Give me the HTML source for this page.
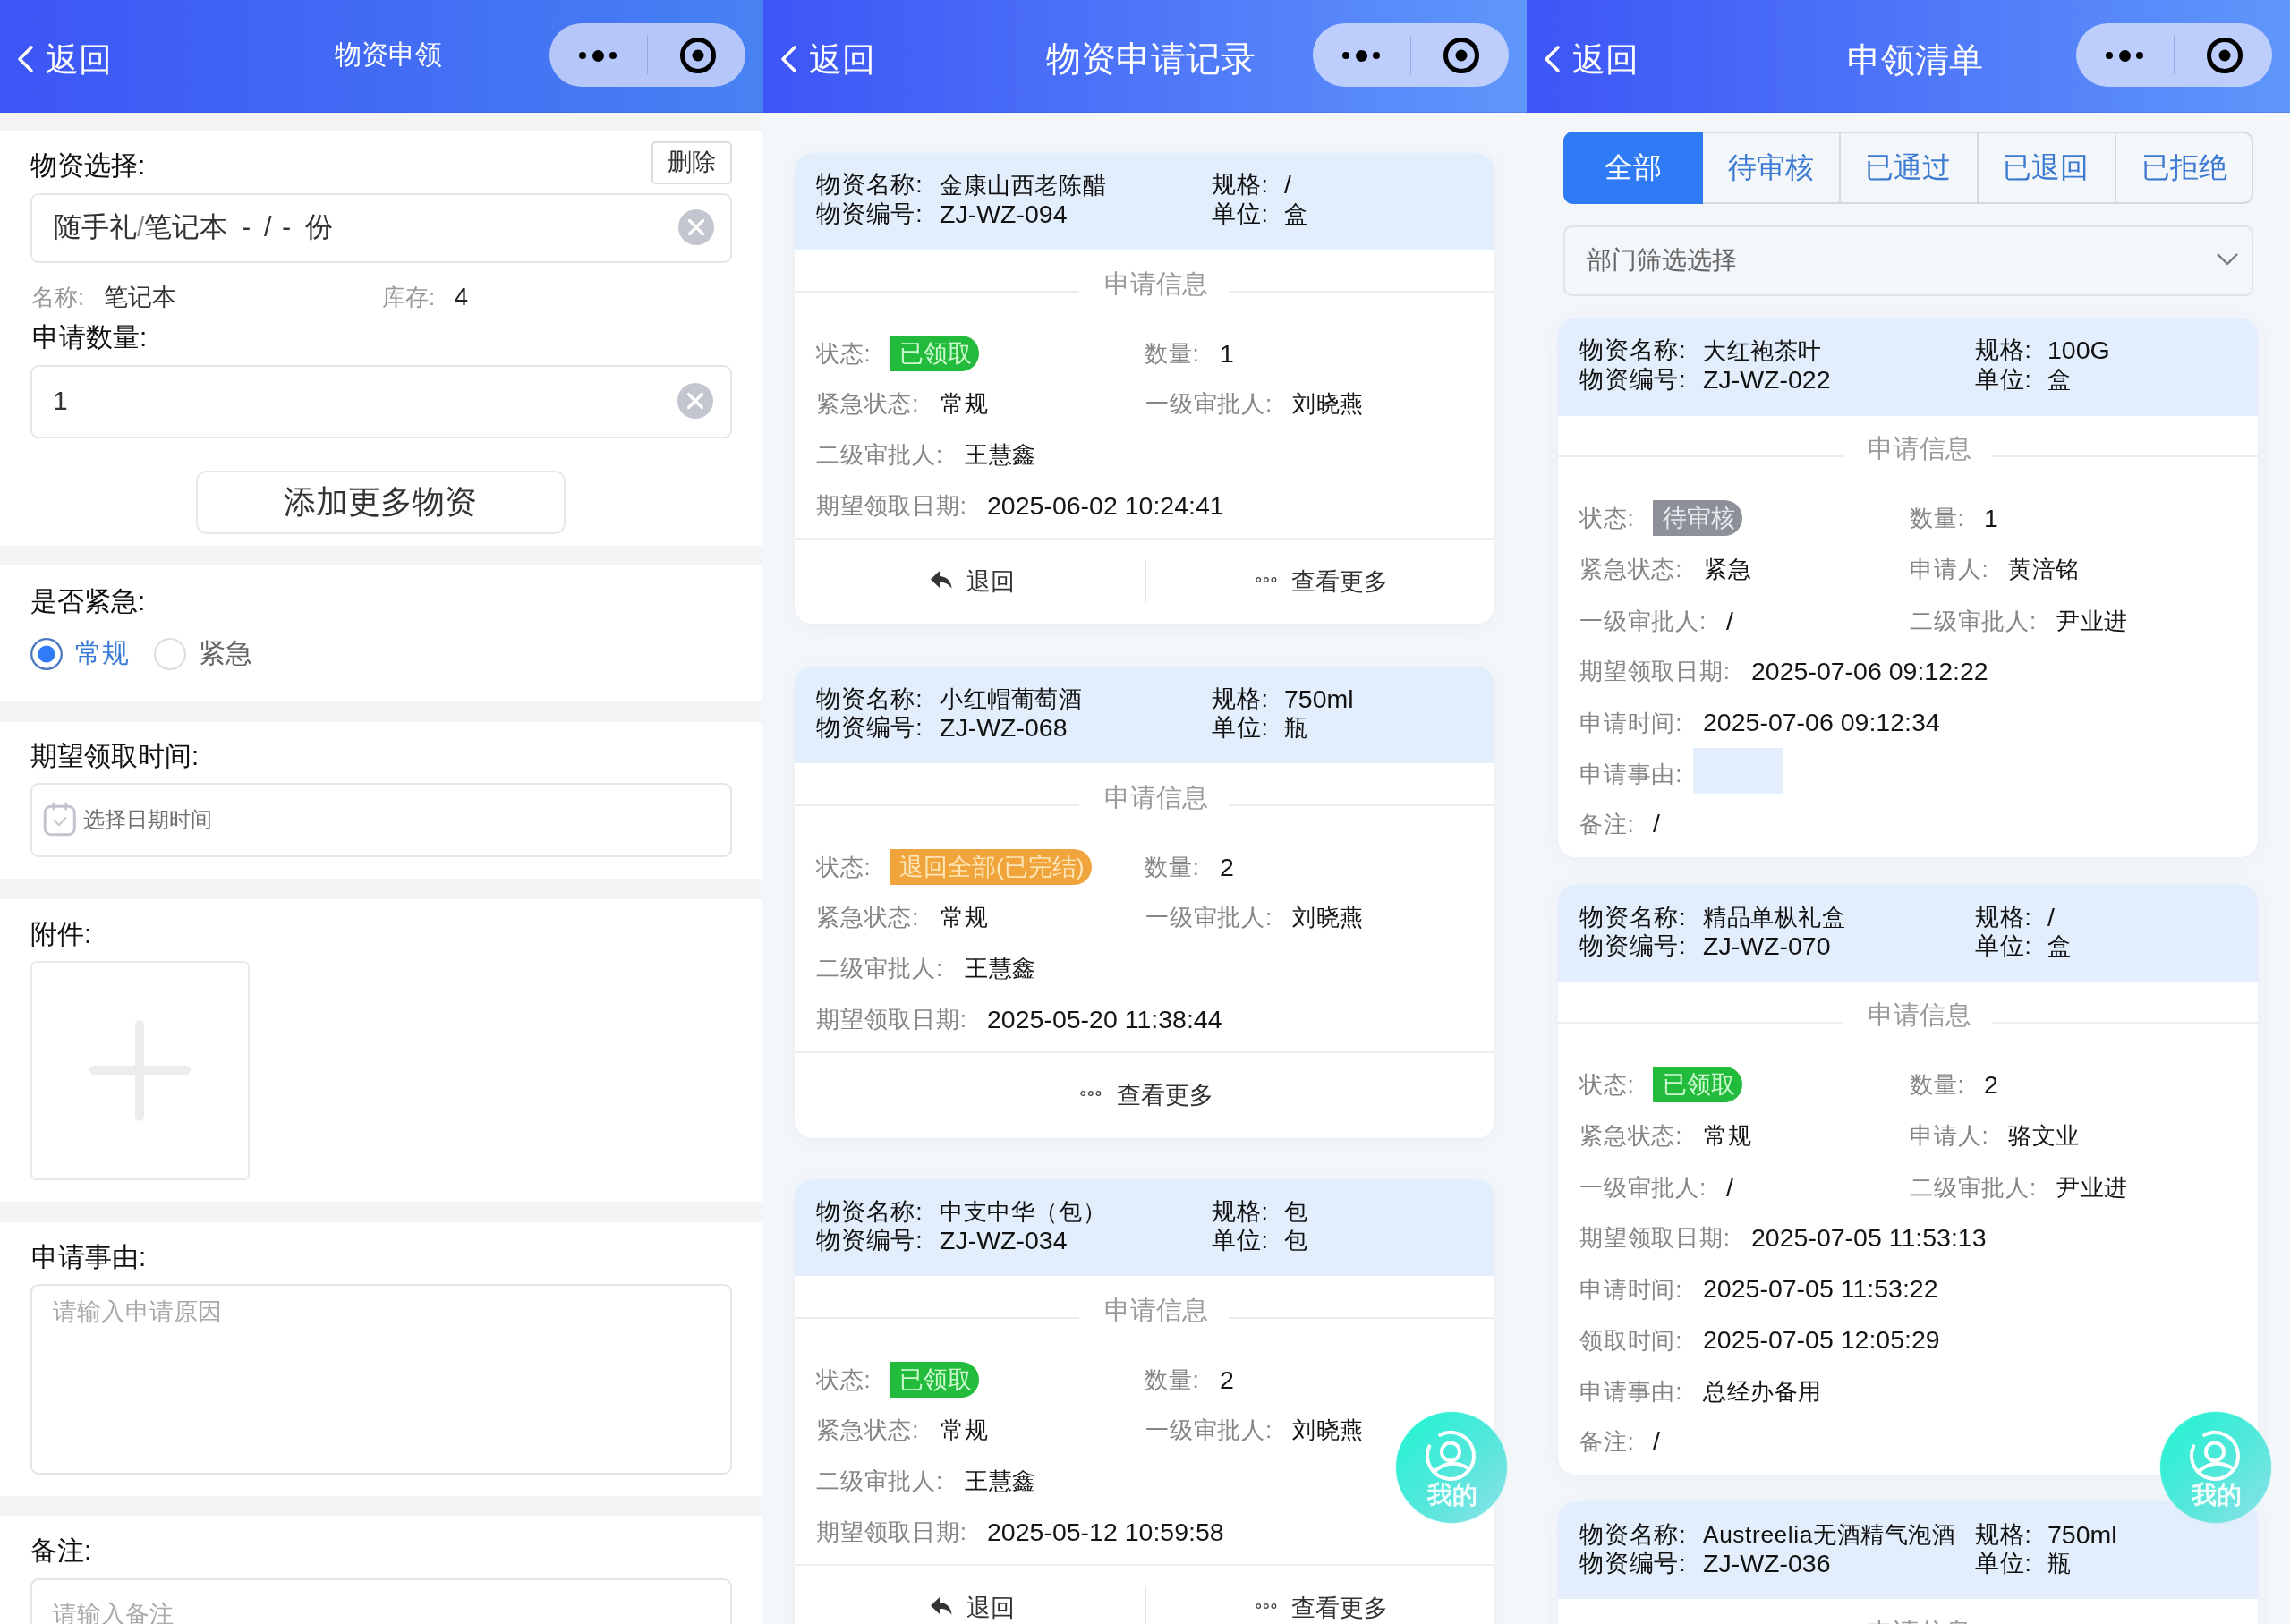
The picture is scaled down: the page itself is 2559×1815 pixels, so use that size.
<!DOCTYPE html><html><head><meta charset="utf-8"><title>物资申领</title><style>
*{margin:0;padding:0;box-sizing:border-box}
html,body{width:2559px;height:1815px;overflow:hidden;background:#fff}
body{position:relative;font-family:"Liberation Sans",sans-serif;-webkit-font-smoothing:antialiased}
.t{position:absolute;white-space:nowrap;will-change:transform}
.b{position:absolute}
svg{position:absolute;overflow:visible}
</style></head><body>
<div class="b" style="left:0.0px;top:126.0px;width:853.0px;height:1689.0px;background:#f4f4f4"></div>
<div class="b" style="left:0.0px;top:0.0px;width:853.0px;height:126.0px;background:linear-gradient(90deg,#3d55f6 0%,#4782f2 100%)"></div>
<div class="b" style="left:0.0px;top:124.5px;width:853.0px;height:1.5px;background:rgba(40,60,160,0.18)"></div>
<svg style="left:18px;top:50px" width="24" height="34" viewBox="0 0 24 34"><polyline points="17,3 4,16 17,29" fill="none" stroke="#fff" stroke-width="3.6" stroke-linecap="round" stroke-linejoin="round"/></svg>
<div class="t" style="left:51.0px;top:48.8px;font-size:36.5px;line-height:36.5px;color:#fff;">返回</div>
<div class="t" style="left:374.0px;top:46.2px;font-size:29.5px;line-height:29.5px;color:#fff;">物资申领</div>
<div class="b" style="left:614.0px;top:26.0px;width:219.0px;height:71.0px;background:#b5c6f9;border-radius:36px"></div>
<div class="b" style="left:722.5px;top:40.0px;width:1.5px;height:43.0px;background:rgba(90,110,170,0.35)"></div>
<div class="b" style="left:647.0px;top:58.0px;width:8.0px;height:8.0px;background:#000;border-radius:50%"></div>
<div class="b" style="left:661.5px;top:55.5px;width:13.0px;height:13.0px;background:#000;border-radius:50%"></div>
<div class="b" style="left:681.0px;top:58.0px;width:8.0px;height:8.0px;background:#000;border-radius:50%"></div>
<svg style="left:760px;top:42px" width="40" height="40" viewBox="0 0 40 40"><circle cx="20" cy="20" r="17.5" fill="none" stroke="#000" stroke-width="5"/><circle cx="20" cy="20" r="6.5" fill="#000"/></svg>
<div class="b" style="left:0.0px;top:146.0px;width:852.0px;height:464.0px;background:#fff"></div>
<div class="b" style="left:0.0px;top:632.0px;width:852.0px;height:151.0px;background:#fff"></div>
<div class="b" style="left:0.0px;top:807.0px;width:852.0px;height:175.0px;background:#fff"></div>
<div class="b" style="left:0.0px;top:1005.0px;width:852.0px;height:338.0px;background:#fff"></div>
<div class="b" style="left:0.0px;top:1366.0px;width:852.0px;height:306.0px;background:#fff"></div>
<div class="b" style="left:0.0px;top:1694.0px;width:852.0px;height:121.0px;background:#fff"></div>
<div class="t" style="left:34.0px;top:169.8px;font-size:29.5px;line-height:29.5px;color:#111;">物资选择:</div>
<div class="b" style="left:728.0px;top:158.0px;width:90.0px;height:48.0px;border:2px solid #dcdcdc;border-radius:5px;background:#fff"></div>
<div class="t" style="left:746.0px;top:167.6px;font-size:26.8px;line-height:26.8px;color:#333;">删除</div>
<div class="b" style="left:34.0px;top:216.0px;width:784.0px;height:78.0px;border:2px solid #e6e6e6;border-radius:9px"></div>
<div class="t" style="left:60.0px;top:237.8px;font-size:30.5px;line-height:30.5px;color:#333;">随手礼<span style="color:#888">/</span>笔记本</div>
<div class="t" style="left:270.0px;top:237.8px;font-size:30.5px;line-height:30.5px;color:#333;">-</div>
<div class="t" style="left:295.0px;top:237.8px;font-size:30.5px;line-height:30.5px;color:#333;">/</div>
<div class="t" style="left:315.0px;top:237.8px;font-size:30.5px;line-height:30.5px;color:#333;">-</div>
<div class="t" style="left:341.0px;top:237.8px;font-size:30.5px;line-height:30.5px;color:#333;">份</div>
<svg style="left:758px;top:234px" width="40" height="40" viewBox="0 0 40 40"><circle cx="20" cy="20" r="20" fill="#c3c6ce"/><path d="M12.5 12.5L27.5 27.5M27.5 12.5L12.5 27.5" stroke="#fff" stroke-width="3.2" stroke-linecap="round"/></svg>
<div class="t" style="left:35.0px;top:319.0px;font-size:26px;line-height:26px;color:#999;">名称:</div>
<div class="t" style="left:116.0px;top:318.8px;font-size:26.5px;line-height:26.5px;color:#333;">笔记本</div>
<div class="t" style="left:427.0px;top:319.0px;font-size:26px;line-height:26px;color:#999;">库存:</div>
<div class="t" style="left:508.0px;top:318.5px;font-size:27px;line-height:27px;color:#222;">4</div>
<div class="t" style="left:36.0px;top:362.2px;font-size:29.5px;line-height:29.5px;color:#111;">申请数量:</div>
<div class="b" style="left:34.0px;top:408.0px;width:784.0px;height:82.0px;border:2px solid #e6e6e6;border-radius:9px"></div>
<div class="t" style="left:59.0px;top:433.0px;font-size:30px;line-height:30px;color:#333;">1</div>
<svg style="left:757px;top:428px" width="40" height="40" viewBox="0 0 40 40"><circle cx="20" cy="20" r="20" fill="#c3c6ce"/><path d="M12.5 12.5L27.5 27.5M27.5 12.5L12.5 27.5" stroke="#fff" stroke-width="3.2" stroke-linecap="round"/></svg>
<div class="b" style="left:219.0px;top:526.0px;width:413.0px;height:71.0px;border:2px solid #e9e9e9;border-radius:12px"></div>
<div class="t" style="left:317.0px;top:542.5px;font-size:36px;line-height:36px;color:#333;">添加更多物资</div>
<div class="t" style="left:34.0px;top:657.2px;font-size:29.5px;line-height:29.5px;color:#111;">是否紧急:</div>
<svg style="left:33px;top:712px" width="38" height="38" viewBox="0 0 38 38"><circle cx="19" cy="19" r="16.8" fill="none" stroke="#4d78c0" stroke-width="2.3"/><circle cx="19" cy="19" r="9.5" fill="#2f7cf6"/></svg>
<div class="t" style="left:84.0px;top:714.5px;font-size:30px;line-height:30px;color:#3b7bd6;">常规</div>
<svg style="left:171px;top:712px" width="38" height="38" viewBox="0 0 38 38"><circle cx="19" cy="19" r="17" fill="none" stroke="#dedede" stroke-width="2.2"/></svg>
<div class="t" style="left:222.0px;top:714.5px;font-size:30px;line-height:30px;color:#666;">紧急</div>
<div class="t" style="left:34.0px;top:830.2px;font-size:29.5px;line-height:29.5px;color:#111;">期望领取时间:</div>
<div class="b" style="left:34.0px;top:875.0px;width:784.0px;height:83.0px;border:2px solid #e6e6e6;border-radius:9px"></div>
<svg style="left:48px;top:897px" width="38" height="38" viewBox="0 0 38 38"><rect x="2.2" y="4.2" width="33.1" height="31.6" rx="7" fill="none" stroke="#c2c6cc" stroke-width="3"/><path d="M11.8 1v6M25.7 1v6" stroke="#c2c6cc" stroke-width="3" stroke-linecap="round"/><path d="M12.7 20l5.3 5.3 7.2-8.2" fill="none" stroke="#c8ccd2" stroke-width="2.2" stroke-linecap="round" stroke-linejoin="round"/></svg>
<div class="t" style="left:93.0px;top:904.0px;font-size:24px;line-height:24px;color:#707070;">选择日期时间</div>
<div class="t" style="left:34.0px;top:1029.2px;font-size:29.5px;line-height:29.5px;color:#111;">附件:</div>
<div class="b" style="left:34.0px;top:1074.0px;width:245.0px;height:245.0px;border:2px solid #e9e9e9;border-radius:7px"></div>
<div class="b" style="left:99.5px;top:1191.0px;width:113.0px;height:10.0px;background:#ececec;border-radius:5px"></div>
<div class="b" style="left:151.0px;top:1140.0px;width:10.0px;height:113.0px;background:#ececec;border-radius:5px"></div>
<div class="t" style="left:35.0px;top:1389.8px;font-size:29.5px;line-height:29.5px;color:#111;">申请事由:</div>
<div class="b" style="left:33.5px;top:1435.0px;width:784.5px;height:213.0px;border:2px solid #e4e4e4;border-radius:9px"></div>
<div class="t" style="left:59.0px;top:1452.5px;font-size:27px;line-height:27px;color:#aaa;">请输入申请原因</div>
<div class="t" style="left:34.0px;top:1718.2px;font-size:29.5px;line-height:29.5px;color:#111;">备注:</div>
<div class="b" style="left:33.5px;top:1763.5px;width:784.5px;height:136.5px;border:2px solid #e4e4e4;border-radius:9px"></div>
<div class="t" style="left:59.0px;top:1790.5px;font-size:27px;line-height:27px;color:#aaa;">请输入备注</div>
<div class="b" style="left:852.0px;top:126.0px;width:854.0px;height:1689.0px;background:#f3f7fa"></div>
<div class="b" style="left:853.0px;top:0.0px;width:853.0px;height:126.0px;background:linear-gradient(90deg,#3d55f6 0%,#5f97fb 100%)"></div>
<div class="b" style="left:853.0px;top:124.5px;width:853.0px;height:1.5px;background:rgba(40,60,160,0.18)"></div>
<svg style="left:871px;top:50px" width="24" height="34" viewBox="0 0 24 34"><polyline points="17,3 4,16 17,29" fill="none" stroke="#fff" stroke-width="3.6" stroke-linecap="round" stroke-linejoin="round"/></svg>
<div class="t" style="left:904.0px;top:48.8px;font-size:36.5px;line-height:36.5px;color:#fff;">返回</div>
<div class="t" style="left:1169.0px;top:47.2px;font-size:38.5px;line-height:38.5px;color:#fff;">物资申请记录</div>
<div class="b" style="left:1467.0px;top:26.0px;width:219.0px;height:71.0px;background:#bdcefc;border-radius:36px"></div>
<div class="b" style="left:1575.5px;top:40.0px;width:1.5px;height:43.0px;background:rgba(90,110,170,0.35)"></div>
<div class="b" style="left:1500.0px;top:58.0px;width:8.0px;height:8.0px;background:#000;border-radius:50%"></div>
<div class="b" style="left:1514.5px;top:55.5px;width:13.0px;height:13.0px;background:#000;border-radius:50%"></div>
<div class="b" style="left:1534.0px;top:58.0px;width:8.0px;height:8.0px;background:#000;border-radius:50%"></div>
<svg style="left:1613px;top:42px" width="40" height="40" viewBox="0 0 40 40"><circle cx="20" cy="20" r="17.5" fill="none" stroke="#000" stroke-width="5"/><circle cx="20" cy="20" r="6.5" fill="#000"/></svg>
<div class="b" style="left:888.0px;top:171.0px;width:782.0px;height:526.0px;background:#fff;border-radius:20px;box-shadow:0 2px 20px rgba(60,80,120,0.055);overflow:hidden"></div>
<div class="b" style="left:888.0px;top:171.0px;width:782.0px;height:108.0px;background:#e3eefc;border-radius:20px 20px 0 0"></div>
<div class="t" style="left:912.0px;top:193.4px;font-size:26.5px;line-height:26.5px;color:#111;letter-spacing:0.8px">物资名称:</div>
<div class="t" style="left:1049.5px;top:193.5px;font-size:26.3px;line-height:26.3px;color:#111;letter-spacing:0.6px">金康山西老陈醋</div>
<div class="t" style="left:912.0px;top:226.2px;font-size:26.5px;line-height:26.5px;color:#111;letter-spacing:0.8px">物资编号:</div>
<div class="t" style="left:1049.5px;top:225.2px;font-size:28.5px;line-height:28.5px;color:#111;">ZJ-WZ-094</div>
<div class="t" style="left:1353.5px;top:193.4px;font-size:26.5px;line-height:26.5px;color:#111;letter-spacing:0.8px">规格:</div>
<div class="t" style="left:1434.5px;top:192.4px;font-size:28.5px;line-height:28.5px;color:#111;">/</div>
<div class="t" style="left:1353.5px;top:226.2px;font-size:26.5px;line-height:26.5px;color:#111;letter-spacing:0.8px">单位:</div>
<div class="t" style="left:1434.5px;top:226.3px;font-size:26.3px;line-height:26.3px;color:#111;letter-spacing:0.6px">盒</div>
<div class="b" style="left:888.0px;top:325.0px;width:318.0px;height:2.0px;background:#ececec"></div>
<div class="b" style="left:1372.5px;top:325.0px;width:297.5px;height:2.0px;background:#ececec"></div>
<div class="t" style="left:1234.0px;top:303.2px;font-size:28.5px;line-height:28.5px;color:#9a9a9a;">申请信息</div>
<div class="t" style="left:912.0px;top:381.8px;font-size:26px;line-height:26px;color:#858585;letter-spacing:0.8px">状态:</div>
<div class="b" style="left:994.0px;top:374.5px;width:99.5px;height:40.6px;background:#22bb3c;border-radius:1px 21px 21px 1px"></div>
<div class="t" style="left:1005.0px;top:381.6px;font-size:26.5px;line-height:26.5px;color:#cdf9cf;">已领取</div>
<div class="t" style="left:1279.0px;top:381.8px;font-size:26px;line-height:26px;color:#858585;letter-spacing:0.8px">数量:</div>
<div class="t" style="left:1363.0px;top:380.6px;font-size:28.5px;line-height:28.5px;color:#151515;">1</div>
<div class="t" style="left:912.0px;top:438.4px;font-size:26px;line-height:26px;color:#858585;letter-spacing:0.8px">紧急状态:</div>
<div class="t" style="left:1051.0px;top:438.2px;font-size:26.3px;line-height:26.3px;color:#151515;letter-spacing:0.6px">常规</div>
<div class="t" style="left:1279.5px;top:438.4px;font-size:26px;line-height:26px;color:#858585;letter-spacing:0.8px">一级审批人:</div>
<div class="t" style="left:1444.0px;top:438.2px;font-size:26.3px;line-height:26.3px;color:#151515;letter-spacing:0.6px">刘晓燕</div>
<div class="t" style="left:912.0px;top:495.3px;font-size:26px;line-height:26px;color:#858585;letter-spacing:0.8px">二级审批人:</div>
<div class="t" style="left:1077.5px;top:495.2px;font-size:26.3px;line-height:26.3px;color:#151515;letter-spacing:0.6px">王慧鑫</div>
<div class="t" style="left:912.0px;top:551.9px;font-size:26px;line-height:26px;color:#858585;letter-spacing:0.8px">期望领取日期:</div>
<div class="t" style="left:1103.0px;top:550.6px;font-size:28.5px;line-height:28.5px;color:#151515;">2025-06-02 10:24:41</div>
<div class="b" style="left:888.0px;top:601.0px;width:782.0px;height:2.0px;background:#eeeeee"></div>
<svg style="left:1039px;top:637px" width="26" height="22" viewBox="0 0 26 22"><path d="M11 1 L1 10.5 L11 20 L11 14 C17 13.5 21.5 15.5 24.5 21 C24 13 19.5 7.5 11 7 Z" fill="#333"/></svg>
<div class="t" style="left:1080.0px;top:637.3px;font-size:27px;line-height:27px;color:#333;">退回</div>
<div class="b" style="left:1279.5px;top:625.5px;width:1.5px;height:48.5px;background:#e6e6e6"></div>
<svg style="left:1402px;top:644px" width="26" height="8" viewBox="0 0 26 8"><circle cx="4.2" cy="4" r="2.3" fill="none" stroke="#444" stroke-width="1.3"/><circle cx="12.8" cy="4" r="2.3" fill="none" stroke="#444" stroke-width="1.3"/><circle cx="21.4" cy="4" r="2.3" fill="none" stroke="#444" stroke-width="1.3"/></svg>
<div class="t" style="left:1442.5px;top:637.3px;font-size:27px;line-height:27px;color:#333;">查看更多</div>
<div class="b" style="left:888.0px;top:745.0px;width:782.0px;height:527.0px;background:#fff;border-radius:20px;box-shadow:0 2px 20px rgba(60,80,120,0.055);overflow:hidden"></div>
<div class="b" style="left:888.0px;top:745.0px;width:782.0px;height:108.0px;background:#e3eefc;border-radius:20px 20px 0 0"></div>
<div class="t" style="left:912.0px;top:767.5px;font-size:26.5px;line-height:26.5px;color:#111;letter-spacing:0.8px">物资名称:</div>
<div class="t" style="left:1049.5px;top:767.6px;font-size:26.3px;line-height:26.3px;color:#111;letter-spacing:0.6px">小红帽葡萄酒</div>
<div class="t" style="left:912.0px;top:800.2px;font-size:26.5px;line-height:26.5px;color:#111;letter-spacing:0.8px">物资编号:</div>
<div class="t" style="left:1049.5px;top:799.2px;font-size:28.5px;line-height:28.5px;color:#111;">ZJ-WZ-068</div>
<div class="t" style="left:1353.5px;top:767.5px;font-size:26.5px;line-height:26.5px;color:#111;letter-spacing:0.8px">规格:</div>
<div class="t" style="left:1434.5px;top:766.5px;font-size:28.5px;line-height:28.5px;color:#111;">750ml</div>
<div class="t" style="left:1353.5px;top:800.2px;font-size:26.5px;line-height:26.5px;color:#111;letter-spacing:0.8px">单位:</div>
<div class="t" style="left:1434.5px;top:800.4px;font-size:26.3px;line-height:26.3px;color:#111;letter-spacing:0.6px">瓶</div>
<div class="b" style="left:888.0px;top:899.0px;width:318.0px;height:2.0px;background:#ececec"></div>
<div class="b" style="left:1372.5px;top:899.0px;width:297.5px;height:2.0px;background:#ececec"></div>
<div class="t" style="left:1234.0px;top:877.2px;font-size:28.5px;line-height:28.5px;color:#9a9a9a;">申请信息</div>
<div class="t" style="left:912.0px;top:955.8px;font-size:26px;line-height:26px;color:#858585;letter-spacing:0.8px">状态:</div>
<div class="b" style="left:994.0px;top:948.5px;width:225.5px;height:40.6px;background:#f0a43c;border-radius:1px 21px 21px 1px"></div>
<div class="t" style="left:1005.0px;top:955.5px;font-size:26.5px;line-height:26.5px;color:#fde6b8;">退回全部(已完结)</div>
<div class="t" style="left:1279.0px;top:955.8px;font-size:26px;line-height:26px;color:#858585;letter-spacing:0.8px">数量:</div>
<div class="t" style="left:1363.0px;top:954.5px;font-size:28.5px;line-height:28.5px;color:#151515;">2</div>
<div class="t" style="left:912.0px;top:1012.4px;font-size:26px;line-height:26px;color:#858585;letter-spacing:0.8px">紧急状态:</div>
<div class="t" style="left:1051.0px;top:1012.3px;font-size:26.3px;line-height:26.3px;color:#151515;letter-spacing:0.6px">常规</div>
<div class="t" style="left:1279.5px;top:1012.4px;font-size:26px;line-height:26px;color:#858585;letter-spacing:0.8px">一级审批人:</div>
<div class="t" style="left:1444.0px;top:1012.3px;font-size:26.3px;line-height:26.3px;color:#151515;letter-spacing:0.6px">刘晓燕</div>
<div class="t" style="left:912.0px;top:1069.3px;font-size:26px;line-height:26px;color:#858585;letter-spacing:0.8px">二级审批人:</div>
<div class="t" style="left:1077.5px;top:1069.1px;font-size:26.3px;line-height:26.3px;color:#151515;letter-spacing:0.6px">王慧鑫</div>
<div class="t" style="left:912.0px;top:1125.9px;font-size:26px;line-height:26px;color:#858585;letter-spacing:0.8px">期望领取日期:</div>
<div class="t" style="left:1103.0px;top:1124.7px;font-size:28.5px;line-height:28.5px;color:#151515;">2025-05-20 11:38:44</div>
<div class="b" style="left:888.0px;top:1175.0px;width:782.0px;height:2.0px;background:#eeeeee"></div>
<svg style="left:1206px;top:1218px" width="26" height="8" viewBox="0 0 26 8"><circle cx="4.2" cy="4" r="2.3" fill="none" stroke="#444" stroke-width="1.3"/><circle cx="12.8" cy="4" r="2.3" fill="none" stroke="#444" stroke-width="1.3"/><circle cx="21.4" cy="4" r="2.3" fill="none" stroke="#444" stroke-width="1.3"/></svg>
<div class="t" style="left:1247.5px;top:1211.0px;font-size:27px;line-height:27px;color:#333;">查看更多</div>
<div class="b" style="left:888.0px;top:1318.0px;width:782.0px;height:542.0px;background:#fff;border-radius:20px;box-shadow:0 2px 20px rgba(60,80,120,0.055);overflow:hidden"></div>
<div class="b" style="left:888.0px;top:1318.0px;width:782.0px;height:108.0px;background:#e3eefc;border-radius:20px 20px 0 0"></div>
<div class="t" style="left:912.0px;top:1340.5px;font-size:26.5px;line-height:26.5px;color:#111;letter-spacing:0.8px">物资名称:</div>
<div class="t" style="left:1049.5px;top:1340.5px;font-size:26.3px;line-height:26.3px;color:#111;letter-spacing:0.6px">中支中华（包）</div>
<div class="t" style="left:912.0px;top:1373.2px;font-size:26.5px;line-height:26.5px;color:#111;letter-spacing:0.8px">物资编号:</div>
<div class="t" style="left:1049.5px;top:1372.2px;font-size:28.5px;line-height:28.5px;color:#111;">ZJ-WZ-034</div>
<div class="t" style="left:1353.5px;top:1340.5px;font-size:26.5px;line-height:26.5px;color:#111;letter-spacing:0.8px">规格:</div>
<div class="t" style="left:1434.5px;top:1340.5px;font-size:26.3px;line-height:26.3px;color:#111;letter-spacing:0.6px">包</div>
<div class="t" style="left:1353.5px;top:1373.2px;font-size:26.5px;line-height:26.5px;color:#111;letter-spacing:0.8px">单位:</div>
<div class="t" style="left:1434.5px;top:1373.3px;font-size:26.3px;line-height:26.3px;color:#111;letter-spacing:0.6px">包</div>
<div class="b" style="left:888.0px;top:1472.0px;width:318.0px;height:2.0px;background:#ececec"></div>
<div class="b" style="left:1372.5px;top:1472.0px;width:297.5px;height:2.0px;background:#ececec"></div>
<div class="t" style="left:1234.0px;top:1450.2px;font-size:28.5px;line-height:28.5px;color:#9a9a9a;">申请信息</div>
<div class="t" style="left:912.0px;top:1528.8px;font-size:26px;line-height:26px;color:#858585;letter-spacing:0.8px">状态:</div>
<div class="b" style="left:994.0px;top:1521.5px;width:99.5px;height:40.6px;background:#22bb3c;border-radius:1px 21px 21px 1px"></div>
<div class="t" style="left:1005.0px;top:1528.5px;font-size:26.5px;line-height:26.5px;color:#cdf9cf;">已领取</div>
<div class="t" style="left:1279.0px;top:1528.8px;font-size:26px;line-height:26px;color:#858585;letter-spacing:0.8px">数量:</div>
<div class="t" style="left:1363.0px;top:1527.5px;font-size:28.5px;line-height:28.5px;color:#151515;">2</div>
<div class="t" style="left:912.0px;top:1585.4px;font-size:26px;line-height:26px;color:#858585;letter-spacing:0.8px">紧急状态:</div>
<div class="t" style="left:1051.0px;top:1585.2px;font-size:26.3px;line-height:26.3px;color:#151515;letter-spacing:0.6px">常规</div>
<div class="t" style="left:1279.5px;top:1585.4px;font-size:26px;line-height:26px;color:#858585;letter-spacing:0.8px">一级审批人:</div>
<div class="t" style="left:1444.0px;top:1585.2px;font-size:26.3px;line-height:26.3px;color:#151515;letter-spacing:0.6px">刘晓燕</div>
<div class="t" style="left:912.0px;top:1642.3px;font-size:26px;line-height:26px;color:#858585;letter-spacing:0.8px">二级审批人:</div>
<div class="t" style="left:1077.5px;top:1642.1px;font-size:26.3px;line-height:26.3px;color:#151515;letter-spacing:0.6px">王慧鑫</div>
<div class="t" style="left:912.0px;top:1698.9px;font-size:26px;line-height:26px;color:#858585;letter-spacing:0.8px">期望领取日期:</div>
<div class="t" style="left:1103.0px;top:1697.7px;font-size:28.5px;line-height:28.5px;color:#151515;">2025-05-12 10:59:58</div>
<div class="b" style="left:888.0px;top:1748.0px;width:782.0px;height:2.0px;background:#eeeeee"></div>
<svg style="left:1039px;top:1784px" width="26" height="22" viewBox="0 0 26 22"><path d="M11 1 L1 10.5 L11 20 L11 14 C17 13.5 21.5 15.5 24.5 21 C24 13 19.5 7.5 11 7 Z" fill="#333"/></svg>
<div class="t" style="left:1080.0px;top:1784.3px;font-size:27px;line-height:27px;color:#333;">退回</div>
<div class="b" style="left:1279.5px;top:1772.5px;width:1.5px;height:48.5px;background:#e6e6e6"></div>
<svg style="left:1402px;top:1791px" width="26" height="8" viewBox="0 0 26 8"><circle cx="4.2" cy="4" r="2.3" fill="none" stroke="#444" stroke-width="1.3"/><circle cx="12.8" cy="4" r="2.3" fill="none" stroke="#444" stroke-width="1.3"/><circle cx="21.4" cy="4" r="2.3" fill="none" stroke="#444" stroke-width="1.3"/></svg>
<div class="t" style="left:1442.5px;top:1784.3px;font-size:27px;line-height:27px;color:#333;">查看更多</div>
<div class="b" style="left:1559.5px;top:1577.5px;width:124px;height:124px;border-radius:50%;background:linear-gradient(135deg,#1ef6d2 0%,#4fe8da 50%,#8fe0e8 100%);box-shadow:0 0 2px rgba(80,240,220,0.6)"></div>
<svg style="left:1589.3px;top:1595.3px" width="64" height="64" viewBox="0 0 64 64"><path d="M20.2 8.83 A26 26 0 1 1 8.25 21.43" fill="none" stroke="#fff" stroke-width="4" stroke-linecap="round"/><circle cx="32" cy="27.5" r="10" fill="none" stroke="#fff" stroke-width="4"/><path d="M13.4 49.7 Q32 33.8 52.2 46.3" fill="none" stroke="#fff" stroke-width="4" stroke-linecap="round"/></svg>
<div class="t" style="left:1594.5px;top:1656.5px;font-size:28px;line-height:28px;color:rgba(255,255,255,0.9);font-weight:700">我的</div>
<div class="b" style="left:1706.0px;top:126.0px;width:853.0px;height:1689.0px;background:#f3f7fa"></div>
<div class="b" style="left:1706.0px;top:0.0px;width:853.0px;height:126.0px;background:linear-gradient(90deg,#3d55f6 0%,#5f97fb 100%)"></div>
<div class="b" style="left:1706.0px;top:124.5px;width:853.0px;height:1.5px;background:rgba(40,60,160,0.18)"></div>
<svg style="left:1724px;top:50px" width="24" height="34" viewBox="0 0 24 34"><polyline points="17,3 4,16 17,29" fill="none" stroke="#fff" stroke-width="3.6" stroke-linecap="round" stroke-linejoin="round"/></svg>
<div class="t" style="left:1757.0px;top:48.8px;font-size:36.5px;line-height:36.5px;color:#fff;">返回</div>
<div class="t" style="left:2064.0px;top:47.5px;font-size:38px;line-height:38px;color:#fff;">申领清单</div>
<div class="b" style="left:2320.0px;top:26.0px;width:219.0px;height:71.0px;background:#bdcefc;border-radius:36px"></div>
<div class="b" style="left:2428.5px;top:40.0px;width:1.5px;height:43.0px;background:rgba(90,110,170,0.35)"></div>
<div class="b" style="left:2353.0px;top:58.0px;width:8.0px;height:8.0px;background:#000;border-radius:50%"></div>
<div class="b" style="left:2367.5px;top:55.5px;width:13.0px;height:13.0px;background:#000;border-radius:50%"></div>
<div class="b" style="left:2387.0px;top:58.0px;width:8.0px;height:8.0px;background:#000;border-radius:50%"></div>
<svg style="left:2466px;top:42px" width="40" height="40" viewBox="0 0 40 40"><circle cx="20" cy="20" r="17.5" fill="none" stroke="#000" stroke-width="5"/><circle cx="20" cy="20" r="6.5" fill="#000"/></svg>
<div class="b" style="left:1747.0px;top:146.5px;width:771.0px;height:81.5px;border:2px solid #d6dadf;border-radius:11px;overflow:hidden"></div>
<div class="b" style="left:1747.0px;top:146.5px;width:156.0px;height:81.5px;background:#2f7bf5;border-radius:11px 0 0 11px"></div>
<div class="b" style="left:2054.5px;top:148.0px;width:2.0px;height:78.0px;background:#d6dadf"></div>
<div class="b" style="left:2208.5px;top:148.0px;width:2.0px;height:78.0px;background:#d6dadf"></div>
<div class="b" style="left:2362.5px;top:148.0px;width:2.0px;height:78.0px;background:#d6dadf"></div>
<div class="t" style="left:1793.0px;top:171.0px;font-size:32px;line-height:32px;color:#fff;">全部</div>
<div class="t" style="left:1931.0px;top:171.0px;font-size:32px;line-height:32px;color:#3c7ad2;">待审核</div>
<div class="t" style="left:2084.0px;top:171.0px;font-size:32px;line-height:32px;color:#3c7ad2;">已通过</div>
<div class="t" style="left:2238.0px;top:171.0px;font-size:32px;line-height:32px;color:#3c7ad2;">已退回</div>
<div class="t" style="left:2392.5px;top:171.0px;font-size:32px;line-height:32px;color:#3c7ad2;">已拒绝</div>
<div class="b" style="left:1747.0px;top:252.0px;width:771.0px;height:79.0px;border:2px solid #dfe3e8;border-radius:9px"></div>
<div class="t" style="left:1772.5px;top:276.8px;font-size:27.5px;line-height:27.5px;color:#666;">部门筛选选择</div>
<svg style="left:2476px;top:282px" width="26" height="16" viewBox="0 0 26 16"><polyline points="2,2 13,13 24,2" fill="none" stroke="#777" stroke-width="2.4" stroke-linejoin="round"/></svg>
<div class="b" style="left:1741.0px;top:354.5px;width:782.0px;height:603.0px;background:#fff;border-radius:20px;box-shadow:0 2px 20px rgba(60,80,120,0.055);overflow:hidden"></div>
<div class="b" style="left:1741.0px;top:354.5px;width:782.0px;height:110.0px;background:#e3eefc;border-radius:20px 20px 0 0"></div>
<div class="t" style="left:1765.0px;top:378.4px;font-size:26.5px;line-height:26.5px;color:#111;letter-spacing:0.8px">物资名称:</div>
<div class="t" style="left:1902.5px;top:378.6px;font-size:26.3px;line-height:26.3px;color:#111;letter-spacing:0.6px">大红袍茶叶</div>
<div class="t" style="left:1765.0px;top:411.2px;font-size:26.5px;line-height:26.5px;color:#111;letter-spacing:0.8px">物资编号:</div>
<div class="t" style="left:1902.5px;top:410.2px;font-size:28.5px;line-height:28.5px;color:#111;">ZJ-WZ-022</div>
<div class="t" style="left:2206.5px;top:378.4px;font-size:26.5px;line-height:26.5px;color:#111;letter-spacing:0.8px">规格:</div>
<div class="t" style="left:2287.5px;top:377.4px;font-size:28.5px;line-height:28.5px;color:#111;">100G</div>
<div class="t" style="left:2206.5px;top:411.2px;font-size:26.5px;line-height:26.5px;color:#111;letter-spacing:0.8px">单位:</div>
<div class="t" style="left:2287.5px;top:411.4px;font-size:26.3px;line-height:26.3px;color:#111;letter-spacing:0.6px">盒</div>
<div class="b" style="left:1741.0px;top:508.5px;width:318.0px;height:2.0px;background:#ececec"></div>
<div class="b" style="left:2225.5px;top:508.5px;width:297.5px;height:2.0px;background:#ececec"></div>
<div class="t" style="left:2087.0px;top:486.8px;font-size:28.5px;line-height:28.5px;color:#9a9a9a;">申请信息</div>
<div class="t" style="left:1765.0px;top:566.0px;font-size:26px;line-height:26px;color:#858585;letter-spacing:0.8px">状态:</div>
<div class="b" style="left:1847.0px;top:558.7px;width:99.5px;height:40.6px;background:#8e9099;border-radius:1px 21px 21px 1px"></div>
<div class="t" style="left:1858.0px;top:565.8px;font-size:26.5px;line-height:26.5px;color:#e9eaee;">待审核</div>
<div class="t" style="left:2133.5px;top:566.0px;font-size:26px;line-height:26px;color:#858585;letter-spacing:0.8px">数量:</div>
<div class="t" style="left:2217.0px;top:564.8px;font-size:28.5px;line-height:28.5px;color:#151515;">1</div>
<div class="t" style="left:1765.0px;top:623.3px;font-size:26px;line-height:26px;color:#858585;letter-spacing:0.8px">紧急状态:</div>
<div class="t" style="left:1903.5px;top:623.1px;font-size:26.3px;line-height:26.3px;color:#151515;letter-spacing:0.6px">紧急</div>
<div class="t" style="left:2133.5px;top:623.3px;font-size:26px;line-height:26px;color:#858585;letter-spacing:0.8px">申请人:</div>
<div class="t" style="left:2243.5px;top:623.1px;font-size:26.3px;line-height:26.3px;color:#151515;letter-spacing:0.6px">黄涪铭</div>
<div class="t" style="left:1765.0px;top:680.8px;font-size:26px;line-height:26px;color:#858585;letter-spacing:0.8px">一级审批人:</div>
<div class="t" style="left:1929.0px;top:679.5px;font-size:28.5px;line-height:28.5px;color:#151515;">/</div>
<div class="t" style="left:2133.5px;top:680.8px;font-size:26px;line-height:26px;color:#858585;letter-spacing:0.8px">二级审批人:</div>
<div class="t" style="left:2298.0px;top:680.6px;font-size:26.3px;line-height:26.3px;color:#151515;letter-spacing:0.6px">尹业进</div>
<div class="t" style="left:1765.0px;top:737.3px;font-size:26px;line-height:26px;color:#858585;letter-spacing:0.8px">期望领取日期:</div>
<div class="t" style="left:1957.0px;top:736.0px;font-size:28.5px;line-height:28.5px;color:#151515;">2025-07-06 09:12:22</div>
<div class="t" style="left:1765.0px;top:794.6px;font-size:26px;line-height:26px;color:#858585;letter-spacing:0.8px">申请时间:</div>
<div class="t" style="left:1902.5px;top:793.4px;font-size:28.5px;line-height:28.5px;color:#151515;">2025-07-06 09:12:34</div>
<div class="t" style="left:1765.0px;top:852.1px;font-size:26px;line-height:26px;color:#858585;letter-spacing:0.8px">申请事由:</div>
<div class="b" style="left:1891.5px;top:835.9px;width:100.0px;height:51.4px;background:#e3eefc"></div>
<div class="t" style="left:1765.0px;top:907.6px;font-size:26px;line-height:26px;color:#858585;letter-spacing:0.8px">备注:</div>
<div class="t" style="left:1847.0px;top:906.4px;font-size:28.5px;line-height:28.5px;color:#151515;">/</div>
<div class="b" style="left:1741.0px;top:987.5px;width:782.0px;height:660.0px;background:#fff;border-radius:20px;box-shadow:0 2px 20px rgba(60,80,120,0.055);overflow:hidden"></div>
<div class="b" style="left:1741.0px;top:987.5px;width:782.0px;height:109.0px;background:#e3eefc;border-radius:20px 20px 0 0"></div>
<div class="t" style="left:1765.0px;top:1011.5px;font-size:26.5px;line-height:26.5px;color:#111;letter-spacing:0.8px">物资名称:</div>
<div class="t" style="left:1902.5px;top:1011.6px;font-size:26.3px;line-height:26.3px;color:#111;letter-spacing:0.6px">精品单枞礼盒</div>
<div class="t" style="left:1765.0px;top:1044.3px;font-size:26.5px;line-height:26.5px;color:#111;letter-spacing:0.8px">物资编号:</div>
<div class="t" style="left:1902.5px;top:1043.3px;font-size:28.5px;line-height:28.5px;color:#111;">ZJ-WZ-070</div>
<div class="t" style="left:2206.5px;top:1011.5px;font-size:26.5px;line-height:26.5px;color:#111;letter-spacing:0.8px">规格:</div>
<div class="t" style="left:2287.5px;top:1010.5px;font-size:28.5px;line-height:28.5px;color:#111;">/</div>
<div class="t" style="left:2206.5px;top:1044.3px;font-size:26.5px;line-height:26.5px;color:#111;letter-spacing:0.8px">单位:</div>
<div class="t" style="left:2287.5px;top:1044.4px;font-size:26.3px;line-height:26.3px;color:#111;letter-spacing:0.6px">盒</div>
<div class="b" style="left:1741.0px;top:1141.5px;width:318.0px;height:2.0px;background:#ececec"></div>
<div class="b" style="left:2225.5px;top:1141.5px;width:297.5px;height:2.0px;background:#ececec"></div>
<div class="t" style="left:2087.0px;top:1119.8px;font-size:28.5px;line-height:28.5px;color:#9a9a9a;">申请信息</div>
<div class="t" style="left:1765.0px;top:1199.0px;font-size:26px;line-height:26px;color:#858585;letter-spacing:0.8px">状态:</div>
<div class="b" style="left:1847.0px;top:1191.7px;width:99.5px;height:40.6px;background:#22bb3c;border-radius:1px 21px 21px 1px"></div>
<div class="t" style="left:1858.0px;top:1198.8px;font-size:26.5px;line-height:26.5px;color:#cdf9cf;">已领取</div>
<div class="t" style="left:2133.5px;top:1199.0px;font-size:26px;line-height:26px;color:#858585;letter-spacing:0.8px">数量:</div>
<div class="t" style="left:2217.0px;top:1197.8px;font-size:28.5px;line-height:28.5px;color:#151515;">2</div>
<div class="t" style="left:1765.0px;top:1256.3px;font-size:26px;line-height:26px;color:#858585;letter-spacing:0.8px">紧急状态:</div>
<div class="t" style="left:1903.5px;top:1256.1px;font-size:26.3px;line-height:26.3px;color:#151515;letter-spacing:0.6px">常规</div>
<div class="t" style="left:2133.5px;top:1256.3px;font-size:26px;line-height:26px;color:#858585;letter-spacing:0.8px">申请人:</div>
<div class="t" style="left:2243.5px;top:1256.1px;font-size:26.3px;line-height:26.3px;color:#151515;letter-spacing:0.6px">骆文业</div>
<div class="t" style="left:1765.0px;top:1313.8px;font-size:26px;line-height:26px;color:#858585;letter-spacing:0.8px">一级审批人:</div>
<div class="t" style="left:1929.0px;top:1312.5px;font-size:28.5px;line-height:28.5px;color:#151515;">/</div>
<div class="t" style="left:2133.5px;top:1313.8px;font-size:26px;line-height:26px;color:#858585;letter-spacing:0.8px">二级审批人:</div>
<div class="t" style="left:2298.0px;top:1313.6px;font-size:26.3px;line-height:26.3px;color:#151515;letter-spacing:0.6px">尹业进</div>
<div class="t" style="left:1765.0px;top:1370.3px;font-size:26px;line-height:26px;color:#858585;letter-spacing:0.8px">期望领取日期:</div>
<div class="t" style="left:1957.0px;top:1369.0px;font-size:28.5px;line-height:28.5px;color:#151515;">2025-07-05 11:53:13</div>
<div class="t" style="left:1765.0px;top:1427.6px;font-size:26px;line-height:26px;color:#858585;letter-spacing:0.8px">申请时间:</div>
<div class="t" style="left:1902.5px;top:1426.3px;font-size:28.5px;line-height:28.5px;color:#151515;">2025-07-05 11:53:22</div>
<div class="t" style="left:1765.0px;top:1484.6px;font-size:26px;line-height:26px;color:#858585;letter-spacing:0.8px">领取时间:</div>
<div class="t" style="left:1902.5px;top:1483.3px;font-size:28.5px;line-height:28.5px;color:#151515;">2025-07-05 12:05:29</div>
<div class="t" style="left:1765.0px;top:1542.1px;font-size:26px;line-height:26px;color:#858585;letter-spacing:0.8px">申请事由:</div>
<div class="t" style="left:1902.5px;top:1541.9px;font-size:26.3px;line-height:26.3px;color:#151515;letter-spacing:0.6px">总经办备用</div>
<div class="t" style="left:1765.0px;top:1597.6px;font-size:26px;line-height:26px;color:#858585;letter-spacing:0.8px">备注:</div>
<div class="t" style="left:1847.0px;top:1596.3px;font-size:28.5px;line-height:28.5px;color:#151515;">/</div>
<div class="b" style="left:1741.0px;top:1677.5px;width:782.0px;height:622.5px;background:#fff;border-radius:20px;box-shadow:0 2px 20px rgba(60,80,120,0.055);overflow:hidden"></div>
<div class="b" style="left:1741.0px;top:1677.5px;width:782.0px;height:109.0px;background:#e3eefc;border-radius:20px 20px 0 0"></div>
<div class="t" style="left:1765.0px;top:1701.5px;font-size:26.5px;line-height:26.5px;color:#111;letter-spacing:0.8px">物资名称:</div>
<div class="t" style="left:1902.5px;top:1701.6px;font-size:26.3px;line-height:26.3px;color:#111;letter-spacing:0.6px">Austreelia无酒精气泡酒</div>
<div class="t" style="left:1765.0px;top:1734.3px;font-size:26.5px;line-height:26.5px;color:#111;letter-spacing:0.8px">物资编号:</div>
<div class="t" style="left:1902.5px;top:1733.3px;font-size:28.5px;line-height:28.5px;color:#111;">ZJ-WZ-036</div>
<div class="t" style="left:2206.5px;top:1701.5px;font-size:26.5px;line-height:26.5px;color:#111;letter-spacing:0.8px">规格:</div>
<div class="t" style="left:2287.5px;top:1700.5px;font-size:28.5px;line-height:28.5px;color:#111;">750ml</div>
<div class="t" style="left:2206.5px;top:1734.3px;font-size:26.5px;line-height:26.5px;color:#111;letter-spacing:0.8px">单位:</div>
<div class="t" style="left:2287.5px;top:1734.4px;font-size:26.3px;line-height:26.3px;color:#111;letter-spacing:0.6px">瓶</div>
<div class="b" style="left:1741.0px;top:1831.5px;width:318.0px;height:2.0px;background:#ececec"></div>
<div class="b" style="left:2225.5px;top:1831.5px;width:297.5px;height:2.0px;background:#ececec"></div>
<div class="t" style="left:2087.0px;top:1809.8px;font-size:28.5px;line-height:28.5px;color:#9a9a9a;">申请信息</div>
<div class="b" style="left:2413.5px;top:1577.5px;width:124px;height:124px;border-radius:50%;background:linear-gradient(135deg,#1ef6d2 0%,#4fe8da 50%,#8fe0e8 100%);box-shadow:0 0 2px rgba(80,240,220,0.6)"></div>
<svg style="left:2443.3px;top:1595.3px" width="64" height="64" viewBox="0 0 64 64"><path d="M20.2 8.83 A26 26 0 1 1 8.25 21.43" fill="none" stroke="#fff" stroke-width="4" stroke-linecap="round"/><circle cx="32" cy="27.5" r="10" fill="none" stroke="#fff" stroke-width="4"/><path d="M13.4 49.7 Q32 33.8 52.2 46.3" fill="none" stroke="#fff" stroke-width="4" stroke-linecap="round"/></svg>
<div class="t" style="left:2448.5px;top:1656.5px;font-size:28px;line-height:28px;color:rgba(255,255,255,0.9);font-weight:700">我的</div>
</body></html>
